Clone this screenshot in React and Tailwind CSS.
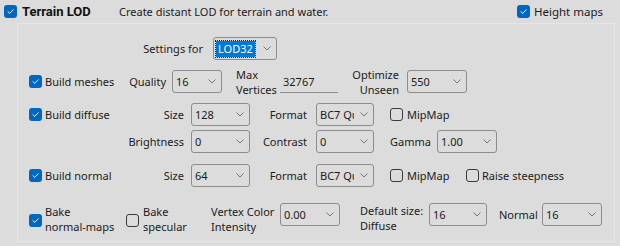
import React from 'react';

const FONT = "font-['Noto_Sans',_'DejaVu_Sans',_sans-serif]";

function Check({ on }) {
  return on ? (
    <span className="w-[13px] h-[13px] rounded-[3px] bg-[#0067c0] flex items-center justify-center shrink-0">
      <svg width="9" height="9" viewBox="0 0 10 10" fill="none">
        <path d="M2.2 5.2l1.9 1.9 3.9-4" stroke="#fff" strokeWidth="1.1" strokeLinecap="round" strokeLinejoin="round" />
      </svg>
    </span>
  ) : (
    <span className="block w-[13px] h-[13px] rounded-[3px] border border-[#3a3a3a] shrink-0" />
  );
}

function Chevron() {
  return (
    <svg width="8" height="5" viewBox="0 0 8 5" fill="none" className="shrink-0">
      <path d="M0.5 0.5l3.5 3.5 3.5-3.5" stroke="#6a6a6a" strokeWidth="0.9" />
    </svg>
  );
}

function Select({ value, className }) {
  return (
    <div className={'h-[23px] shrink-0 border border-[#8c8c8c] rounded-[3px] flex items-center pl-[3px] pr-[5px] ' + className}>
      <span className="flex-1 overflow-hidden whitespace-nowrap">{value}</span>
      <Chevron />
    </div>
  );
}

export default function App() {
  return (
    <div className={'w-[620px] h-[246px] bg-[#dcdcdc] text-[#1b1b1b] text-[11px] leading-[15px] overflow-hidden ' + FONT}>
      {/* header */}
      <div className="h-[23px] flex items-center pl-[4px] pr-[17px]">
        <Check on />
        <span className="ml-[5px] w-[97px] font-['Roboto',_sans-serif] font-bold text-[13px] text-[#111]">Terrain LOD</span>
        <span>Create distant LOD for terrain and water.</span>
        <div className="ml-auto flex items-center gap-[4px]">
          <Check on />
          <span className="text-[11.5px]">Height maps</span>
        </div>
      </div>

      {/* panel */}
      <div className="ml-[17px] w-[598px] h-[219px] border border-[#e6e6e6] flex flex-col">
        {/* settings for */}
        <div className="mt-[13px] h-[23px] flex items-center">
          <span className="w-[185px] text-right">Settings for</span>
          <div className="ml-[10px] w-[64px] h-[23px] border border-[#8c8c8c] rounded-[3px] flex items-center pl-[2px] pr-[5px]">
            <span className="flex-1">
              <span className="inline-block bg-[#0078d7] text-white px-[2px] outline outline-1 outline-dotted outline-[#222] leading-[16px]">LOD32</span>
            </span>
            <Chevron />
          </div>
        </div>

        {/* build meshes */}
        <div className="mt-[10px] h-[23px] flex items-center">
          <div className="ml-[11px] w-[91px] flex items-center gap-[3px]">
            <Check on />
            <span>Build meshes</span>
          </div>
          <span className="w-[46px] text-right">Quality</span>
          <Select value="16" className="ml-[6px] w-[50px]" />
          <span className="ml-[14px] w-[44px]">Max<br />Vertices</span>
          <div className="w-[58px] h-[22px] border-b border-[#8c8c8c] flex items-center pl-[3px]">32767</div>
          <span className="w-[61px] text-right">Optimize<br />Unseen</span>
          <Select value="550" className="ml-[8px] w-[60px]" />
        </div>

        {/* build diffuse */}
        <div className="mt-[10px] h-[23px] flex items-center">
          <div className="ml-[11px] w-[91px] flex items-center gap-[3px]">
            <Check on />
            <span>Build diffuse</span>
          </div>
          <span className="w-[64px] text-right">Size</span>
          <Select value="128" className="ml-[7px] w-[59px]" />
          <span className="w-[57px] text-right">Format</span>
          <Select value={<span className="block w-[34px] overflow-hidden">BC7 Quality</span>} className="ml-[9px] w-[58px]" />
          <div className="ml-[16px] flex items-center gap-[4px]">
            <Check />
            <span>MipMap</span>
          </div>
        </div>

        {/* brightness */}
        <div className="mt-[4px] h-[23px] flex items-center">
          <span className="w-[166px] text-right">Brightness</span>
          <Select value="0" className="ml-[7px] w-[59px]" />
          <span className="w-[57px] text-right">Contrast</span>
          <Select value="0" className="ml-[9px] w-[58px]" />
          <span className="ml-[16px] w-[42px]">Gamma</span>
          <Select value="1.00" className="ml-[5px] w-[60px]" />
        </div>

        {/* build normal */}
        <div className="mt-[11px] h-[23px] flex items-center">
          <div className="ml-[11px] w-[91px] flex items-center gap-[3px]">
            <Check on />
            <span>Build normal</span>
          </div>
          <span className="w-[64px] text-right">Size</span>
          <Select value="64" className="ml-[7px] w-[59px]" />
          <span className="w-[57px] text-right">Format</span>
          <Select value={<span className="block w-[34px] overflow-hidden">BC7 Quality</span>} className="ml-[9px] w-[58px]" />
          <div className="ml-[16px] w-[76px] flex items-center gap-[4px]">
            <Check />
            <span>MipMap</span>
          </div>
          <div className="flex items-center gap-[3px]">
            <Check />
            <span>Raise steepness</span>
          </div>
        </div>

        {/* bake row */}
        <div className="mt-[16px] flex items-start">
          <div className="ml-[11px] w-[97px] flex items-start gap-[3px]">
            <span className="mt-[11px]"><Check on /></span>
            <span className="mt-[1px]">Bake<br />normal-maps</span>
          </div>
          <div className="w-[85px] flex items-start gap-[4px]">
            <span className="mt-[11px]"><Check /></span>
            <span className="mt-[1px]">Bake<br />specular</span>
          </div>
          <span className="w-[69px] mt-[1px]">Vertex Color<br />Intensity</span>
          <Select value="0.00" className="w-[60px]" />
          <span className="ml-[20px] w-[69px]">Default size:<br />Diffuse</span>
          <Select value="16" className="w-[58px]" />
          <span className="ml-[12px] w-[43px] h-[23px] flex items-center">Normal</span>
          <Select value="16" className="w-[60px]" />
        </div>
      </div>
    </div>
  );
}
